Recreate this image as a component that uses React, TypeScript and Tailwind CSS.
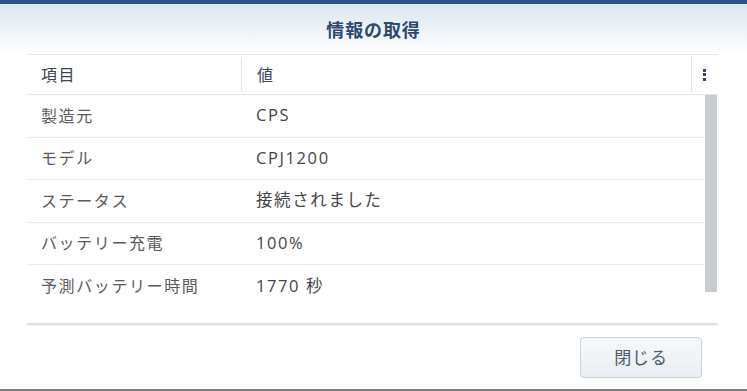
import React from "react";

const rows: [string, string][] = [
  ["製造元", "CPS"],
  ["モデル", "CPJ1200"],
  ["ステータス", "接続されました"],
  ["バッテリー充電", "100%"],
  ["予測バッテリー時間", "1770 秒"],
];

const font = {
  fontFamily: '"Open Sans", "Noto Sans CJK JP", sans-serif',
};

export default function App() {
  return (
    <div className="w-[747px] h-[391px] bg-white flex flex-col overflow-hidden" style={font}>
      <div className="h-[4px] bg-[#2d5283]" />
      <div className="h-[50px] bg-gradient-to-b from-[#dce6f0] to-white flex items-center justify-center">
        <span className="text-[18px] font-bold text-[#2c4a6e] tracking-[0.05em] mt-[2px]">情報の取得</span>
      </div>
      <div className="mx-[27px] w-[691px] flex flex-col">
        <div className="h-[41px] border-t border-b border-[#e4e6e8] flex items-stretch text-[16px] tracking-[0.1em] text-[#38465a]">
          <div className="w-[214px] flex items-center pl-[14px]">項目</div>
          <div className="flex-1 flex items-center pl-[15px] border-l border-[#e2e4e6] my-[2px]">値</div>
          <div className="w-[27px] border-l border-[#e2e4e6] my-[2px] flex flex-col items-center justify-center gap-[1.5px] pr-[1px]">
            <span className="w-[3px] h-[3px] bg-[#3a4a5e]" />
            <span className="w-[3px] h-[3px] bg-[#3a4a5e]" />
            <span className="w-[3px] h-[3px] bg-[#3a4a5e]" />
          </div>
        </div>
        <div className="h-[228px] flex">
          <div className="flex-1 flex flex-col">
            {rows.map(([k, v], i) => (
              <div
                key={k}
                className={`h-[42.5px] shrink-0 flex items-center text-[16px] tracking-[0.1em] ${
                  i < rows.length - 1 ? "border-b border-[#ebebeb]" : ""
                }`}
              >
                <div className="w-[214px] pl-[14px] text-[#5a5a5a]">{k}</div>
                <div className="flex-1 pl-[15px] text-[#454545] text-[16.5px]">{v}</div>
              </div>
            ))}
          </div>
          <div className="w-[13px] flex flex-col">
            <div className="w-[12px] h-[197px] bg-[#c9cdd0]" />
          </div>
        </div>
        <div className="h-[3px] bg-gradient-to-b from-[#d6d6d6] to-[#f4f4f4]" />
      </div>
      <div className="flex-1 flex justify-end items-start pr-[45px] pt-[11px]">
        <button className="w-[122px] h-[41px] rounded-[4px] border border-[#c9d2da] bg-gradient-to-b from-[#f7f9fb] to-[#e9eef2] text-[17px] text-[#4b5a6a] tracking-[0.05em]">
          閉じる
        </button>
      </div>
      <div className="h-[2px] bg-[#7e7e7e]" />
    </div>
  );
}
